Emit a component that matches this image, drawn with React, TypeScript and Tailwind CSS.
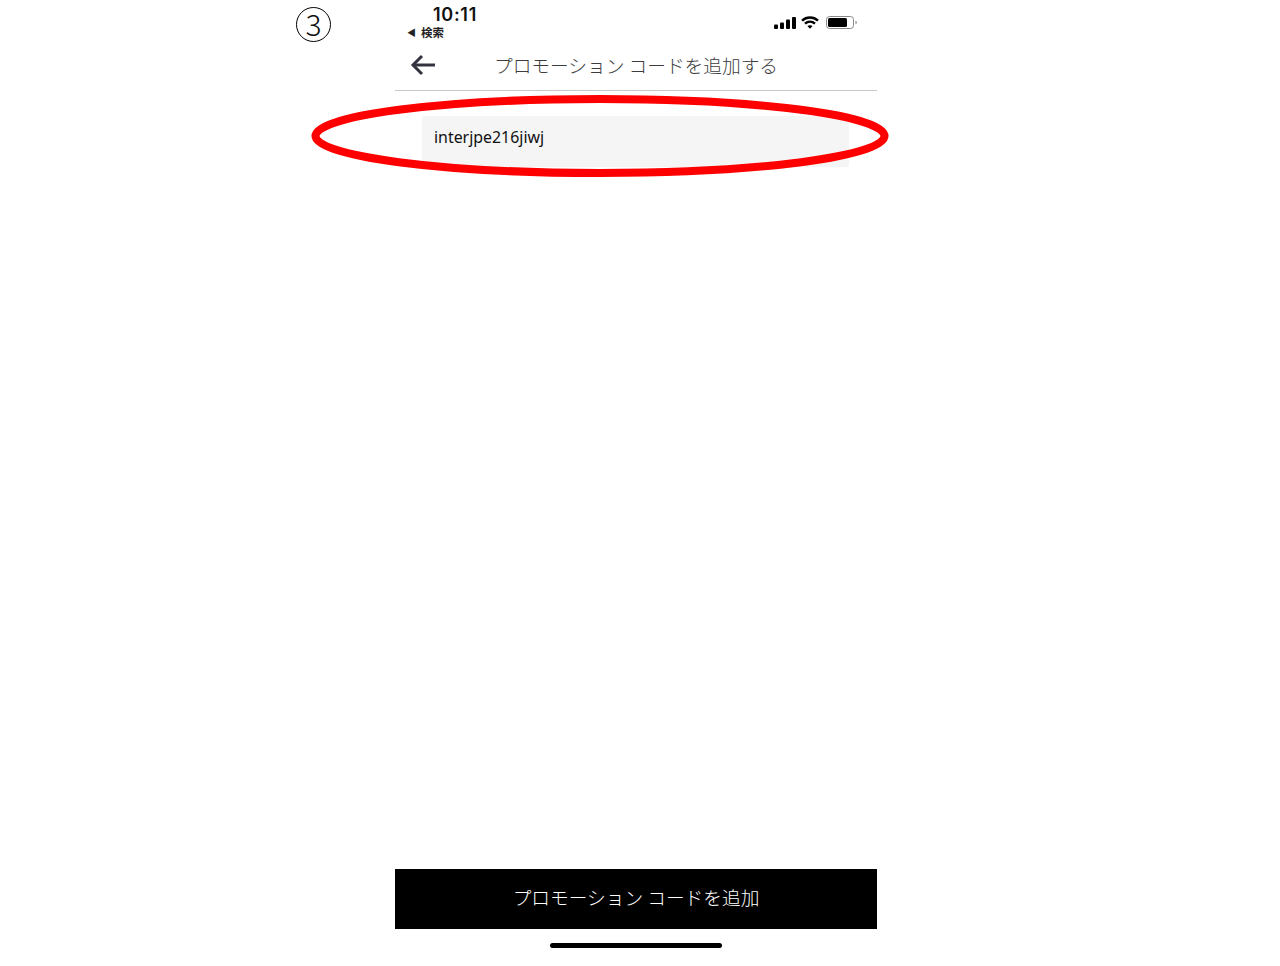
const jp = "font-['Noto_Sans_CJK_JP','Noto_Sans',sans-serif]";

function SignalIcon() {
  return (
    <svg width="22" height="12" viewBox="0 0 22 12" fill="#000">
      <rect x="0" y="7.5" width="4" height="4.5" rx="1" />
      <rect x="6" y="5.5" width="4" height="6.5" rx="1" />
      <rect x="12" y="2.5" width="4" height="9.5" rx="1" />
      <rect x="18" y="0" width="4" height="12" rx="1" />
    </svg>
  );
}

function WifiIcon() {
  return (
    <svg width="18" height="13" viewBox="0 0 18 13" fill="none" stroke="#000" strokeWidth="2.4">
      <path d="M1 4.6C5.6 0.4 12.4 0.4 17 4.6" />
      <path d="M4 7.7C6.9 5.1 11.1 5.1 14 7.7" />
      <path d="M9 12.8L6.4 10.1C8 8.8 10 8.8 11.6 10.1Z" fill="#000" stroke="none" />
    </svg>
  );
}

function BatteryIcon() {
  return (
    <svg width="32" height="13" viewBox="0 0 32 13" fill="none">
      <rect x="0.5" y="0.5" width="27" height="12" rx="3" stroke="#888" />
      <rect x="2" y="2" width="19" height="9" rx="1.5" fill="#000" />
      <path d="M29.5 4.8C30.4 5.1 30.8 5.7 30.8 6.5C30.8 7.3 30.4 7.9 29.5 8.2Z" fill="#888" />
    </svg>
  );
}

function BackArrow() {
  return (
    <svg width="26" height="22" viewBox="0 0 26 22" fill="none" stroke="#33333f" strokeWidth="3">
      <path d="M25 11H3" />
      <path d="M12 2L3 11L12 20" />
    </svg>
  );
}

export default function App() {
  return (
    <div className={`relative h-[966px] w-[1280px] overflow-hidden bg-white ${jp}`}>
      {/* step number, sits beside the phone capture */}
      <div className="absolute left-[296px] top-[7px] flex h-[35px] w-[35px] items-center justify-center rounded-full border-[1.5px] border-black bg-white pb-[3px] text-[30px] font-light leading-none text-[#111]">
        3
      </div>

      <div className="ml-[395px] flex h-[966px] w-[482px] flex-col">
        {/* status bar */}
        <div className="flex h-[44px] justify-between">
          <div className="pl-3 pt-[4px]">
            <div className="pl-[26px] text-[18px] font-semibold leading-[21px] tracking-[0.7px] text-[#111] font-['Inter',sans-serif]">10:11</div>
            <div className="flex items-center gap-[5px] text-[11.5px] font-bold leading-[15px] text-[#222]">
              <span className="text-[9px]">◀</span>
              <span>検索</span>
            </div>
          </div>
          <div className="mt-[16px] flex h-[13px] items-center pr-[19px]">
            <SignalIcon />
            <div className="ml-[5px] mr-[7px]">
              <WifiIcon />
            </div>
            <BatteryIcon />
          </div>
        </div>

        {/* header */}
        <div className="relative flex h-[47px] items-center justify-center border-b border-[#c8c8c8] pb-[4px]">
          <div className="absolute left-[15px] top-[10px]">
            <BackArrow />
          </div>
          <span className="text-[18.7px] font-light text-[#3c3c3c]">プロモーション コードを追加する</span>
        </div>

        {/* code field */}
        <div className="ml-[27px] mt-[25px] flex h-[51px] w-[427px] items-start rounded-[3px] bg-[#f5f5f5] px-3 pt-[10px] text-[15.9px] leading-[23px] text-[#111] font-['Noto_Sans',sans-serif]">
          interjpe216jiwj
        </div>

        {/* submit */}
        <div className="mt-auto flex h-[60px] items-center justify-center bg-black pb-[4px] text-[18.7px] font-light text-white">
          プロモーション コードを追加
        </div>
        <div className="flex h-[37px] items-start justify-center pt-[14px]">
          <div className="h-[5px] w-[172px] rounded-full bg-black" />
        </div>
      </div>

      {/* red annotation ring */}
      <svg className="pointer-events-none absolute left-[305px] top-[90px]" width="590" height="92" viewBox="0 0 590 92" fill="none">
        <ellipse cx="295" cy="46" rx="284.5" ry="37" stroke="#ff0000" strokeWidth="8" />
      </svg>
    </div>
  );
}
